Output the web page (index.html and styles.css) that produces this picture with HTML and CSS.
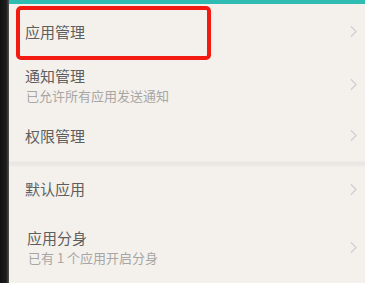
FILE: index.html
```html
<!DOCTYPE html>
<html>
<head>
    <title>应用</title>
    <link rel="stylesheet" href="styles.css">
</head>
<body>

<div class="screen">
  <div class="bezel"></div>
  <div class="panel">
    <div class="topbar"></div>

    <div class="row row-first">
      <div class="label">
        <span class="title">应用管理</span>
      </div>
      <svg class="chevron" viewBox="0 0 8 14"><path d="M1 1l6 6-6 6"/></svg>
    </div>

    <div class="row row-notify">
      <div class="label">
        <span class="title">通知管理</span>
        <span class="sub">已允许所有应用发送通知</span>
      </div>
      <svg class="chevron" viewBox="0 0 8 14"><path d="M1 1l6 6-6 6"/></svg>
    </div>

    <div class="row row-perm">
      <div class="label">
        <span class="title">权限管理</span>
      </div>
      <svg class="chevron" viewBox="0 0 8 14"><path d="M1 1l6 6-6 6"/></svg>
    </div>

    <div class="divider"></div>

    <div class="row row-default">
      <div class="label">
        <span class="title">默认应用</span>
      </div>
      <svg class="chevron" viewBox="0 0 8 14"><path d="M1 1l6 6-6 6"/></svg>
    </div>

    <div class="row row-clone">
      <div class="label">
        <span class="title">应用分身</span>
        <span class="sub">已有 1 个应用开启分身</span>
      </div>
      <svg class="chevron" viewBox="0 0 8 14"><path d="M1 1l6 6-6 6"/></svg>
    </div>

    <!-- red annotation box over the first row -->
    <div class="highlight"></div>
  </div>
</div>

</body>
</html>
```

FILE: styles.css
```css
body {
    margin: 0;
    padding: 0;
    background-color: #f3f0ec;
    font-family: "Noto Sans CJK SC", "Noto Sans", sans-serif;
    overflow: hidden;
}

.screen {
    display: flex;
    width: 365px;
    height: 283px;
}

.bezel {
    width: 9px;
    flex-shrink: 0;
    background: linear-gradient(to right, #111 0%, #1e1e1e 70%, #555 100%);
}

.panel {
    position: relative;
    flex: 1;
    display: flex;
    flex-direction: column;
    background-color: #f4f1ed;
}

.topbar {
    height: 4px;
    background-color: #2fbcb2;
}

.row {
    display: flex;
    align-items: center;
    justify-content: space-between;
    padding: 0 8px 0 16px;
}

.row-first { height: 56px; }
.row-notify { height: 50px; }
.row-perm { height: 52px; }
.row-default { height: 44px; }
.row-clone { height: 72px; }

.label {
    display: flex;
    flex-direction: column;
}

.title {
    font-size: 15px;
    line-height: 20px;
    color: #5e5e5e;
}

.sub {
    font-size: 13px;
    line-height: 16px;
    color: #a8a6a4;
    margin-left: 1px;
}

.row-notify .title,
.row-clone .title {
    margin-bottom: 2px;
}

.row-clone .label {
    margin-left: 2px;
}

.chevron {
    width: 7px;
    height: 13px;
    fill: none;
    stroke: #cfcccc;
    stroke-width: 1.3;
}

.divider {
    height: 6px;
    background: linear-gradient(to bottom, #efebe7, #e8e5e2, #f2efeb);
}

.highlight {
    position: absolute;
    left: 7px;
    top: 6px;
    width: 187px;
    height: 46px;
    border: 4px solid #f31a12;
    border-radius: 5px;
}
```
